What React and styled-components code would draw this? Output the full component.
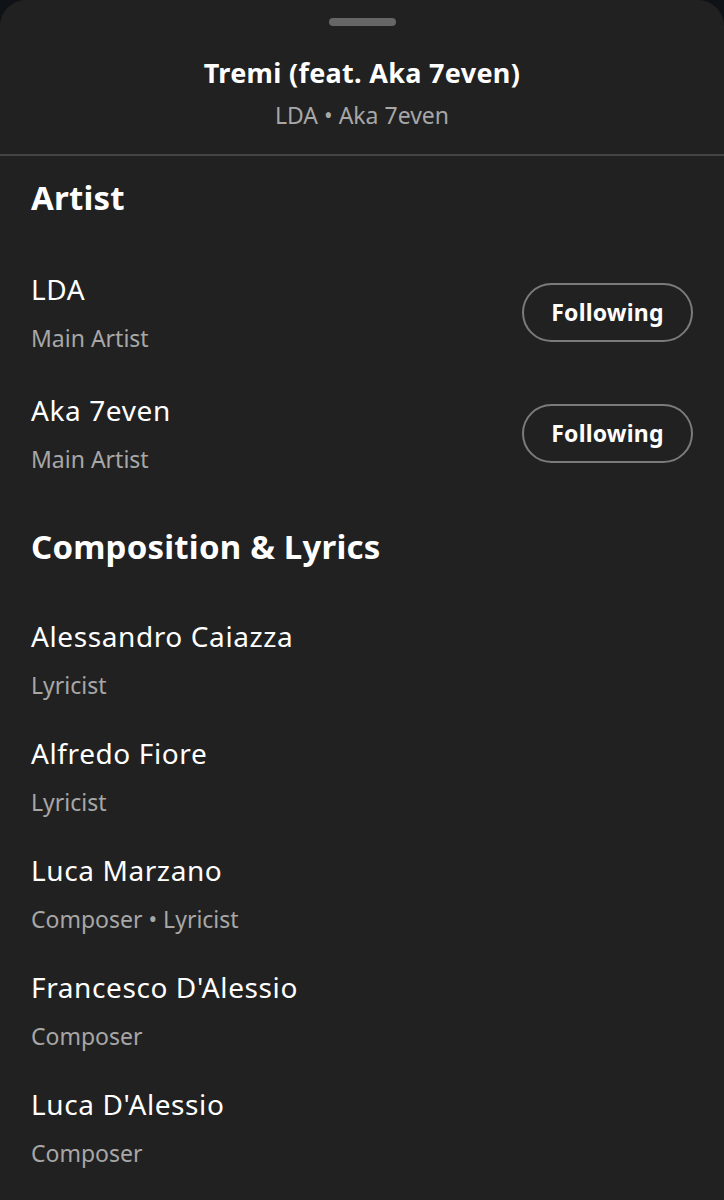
import React from "react";
import styled, { createGlobalStyle } from "styled-components";

const Global = createGlobalStyle`
  html, body { margin: 0; padding: 0; background: #0f1317; }
  body { font-family: "Noto Sans", "Lato", sans-serif; -webkit-font-smoothing: antialiased; }
  * { box-sizing: border-box; }
`;

const Sheet = styled.div`
  min-height: 1200px;
  background: #212121;
  border-radius: 26px 26px 0 0;
  color: #fff;
  display: flex;
  flex-direction: column;
`;

const Header = styled.header`
  display: flex;
  flex-direction: column;
  align-items: center;
  padding-top: 18px;
  padding-bottom: 25px;
  border-bottom: 2px solid #444;
`;

const Handle = styled.div`
  width: 67px;
  height: 8px;
  border-radius: 4px;
  background: #666;
`;

const Title = styled.h1`
  margin: 31px 0 0;
  font-size: 27px;
  line-height: 32px;
  font-weight: 700;
  letter-spacing: 0.3px;
`;

const Subtitle = styled.div`
  margin-top: 12px;
  font-size: 23px;
  line-height: 28px;
  color: #a7a7a7;
`;

const Section = styled.section`
  display: flex;
  flex-direction: column;
  padding: 0 31px;
  margin-top: ${(p) => p.$top}px;
`;

const Heading = styled.h2`
  margin: 0;
  font-size: 33px;
  line-height: 40px;
  font-weight: 700;
  letter-spacing: 0.2px;
`;

const List = styled.div`
  display: flex;
  flex-direction: column;
  margin-top: ${(p) => p.$top}px;
  gap: ${(p) => p.$gap}px;
`;

const Row = styled.div`
  display: flex;
  align-items: center;
  justify-content: space-between;
`;

const Info = styled.div`
  display: flex;
  flex-direction: column;
  gap: 18px;
`;

const Name = styled.div`
  font-size: 28px;
  line-height: 34px;
  letter-spacing: 0.6px;
`;

const Role = styled.div`
  font-size: 23px;
  line-height: 28px;
  color: #a7a7a7;
`;

const FollowButton = styled.button`
  width: 171px;
  height: 59px;
  border-radius: 30px;
  border: 2px solid #7b7b7b;
  background: transparent;
  color: #fff;
  font-family: inherit;
  font-size: 23px;
  font-weight: 700;
  letter-spacing: 0.2px;
  padding: 0;
`;

const artists = [
  { name: "LDA", role: "Main Artist" },
  { name: "Aka 7even", role: "Main Artist" },
];

const credits = [
  { name: "Alessandro Caiazza", role: "Lyricist" },
  { name: "Alfredo Fiore", role: "Lyricist" },
  { name: "Luca Marzano", role: "Composer • Lyricist" },
  { name: "Francesco D'Alessio", role: "Composer" },
  { name: "Luca D'Alessio", role: "Composer" },
];

export default function App() {
  return (
    <>
      <Global />
      <Sheet>
        <Header>
          <Handle />
          <Title>Tremi (feat. Aka 7even)</Title>
          <Subtitle>LDA • Aka 7even</Subtitle>
        </Header>
        <Section $top={22}>
          <Heading>Artist</Heading>
          <List $top={54} $gap={41}>
            {artists.map((a) => (
              <Row key={a.name}>
                <Info>
                  <Name>{a.name}</Name>
                  <Role>{a.role}</Role>
                </Info>
                <FollowButton>Following</FollowButton>
              </Row>
            ))}
          </List>
        </Section>
        <Section $top={54}>
          <Heading>Composition &amp; Lyrics</Heading>
          <List $top={52} $gap={37}>
            {credits.map((c) => (
              <Row key={c.name}>
                <Info>
                  <Name>{c.name}</Name>
                  <Role>{c.role}</Role>
                </Info>
              </Row>
            ))}
          </List>
        </Section>
      </Sheet>
    </>
  );
}
